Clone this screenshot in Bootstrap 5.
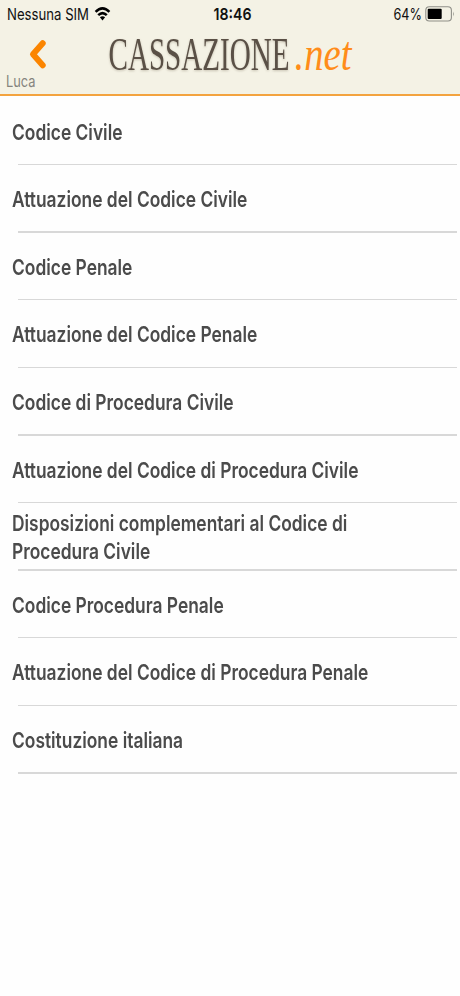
<!DOCTYPE html>
<html lang="it">
<head>
<meta charset="utf-8">
<meta name="viewport" content="width=device-width, initial-scale=1">
<title>Cassazione.net</title>
<link href="https://cdn.jsdelivr.net/npm/bootstrap@5.3.0/dist/css/bootstrap.min.css" rel="stylesheet">
<style>
  body { font-family: Inter, "Liberation Sans", sans-serif; background: #fefefe; min-height: 996px; }
  .app-header { height: 96px; background: #f4f2e5; border-bottom: 2px solid #f3a33f; }
  .app-header svg { display: block; }
  .wordmark { filter: drop-shadow(.8px 1.2px .8px rgba(90, 75, 50, .28)); }
  .codes { padding-top: 1.6px; }
  .code-row { height: 67.6px; padding: 3px 0 0 11.5px; color: #4b4b4b; font-size: 22px; font-weight: 600; line-height: 27.4px; }
  .code-row::after { content: ""; height: 1.3px; background: #d8d8d8; margin: 0 3px 0 6.5px; flex: none; }
  .squeeze { display: inline-block; transform: scaleX(.79); transform-origin: 0 50%; white-space: nowrap; }
</style>
</head>
<body>
<header class="app-header">
  <svg width="460" height="94" viewBox="0 0 460 94" font-family="Inter, 'Liberation Sans', sans-serif" role="img" aria-label="Cassazione.net">
    <g fill="#111">
      <text x="7" y="20.3" font-size="16.5" textLength="82" lengthAdjust="spacingAndGlyphs">Nessuna SIM</text>
      <text x="213.5" y="20.3" font-size="16.5" font-weight="600" textLength="38" lengthAdjust="spacingAndGlyphs">18:46</text>
      <text x="393.5" y="20.3" font-size="16.5" textLength="28.5" lengthAdjust="spacingAndGlyphs">64%</text>
    </g>
    <g fill="none" stroke="#000" stroke-width="2.5">
      <path d="M95.6 11.9Q102.5 5 109.4 11.9"/>
      <path d="M98.2 15.2Q102.5 11 106.8 15.2"/>
    </g>
    <path d="M99.9 17.3Q102.5 15 105.1 17.3L102.5 20.5Z"/>
    <rect x="425.8" y="6.8" width="25.6" height="14.2" rx="3.5" fill="none" stroke="#8f8f88" stroke-width="1.1"/>
    <rect x="427.7" y="8.8" width="14" height="10.2" rx="1"/>
    <path d="M453 11.5Q454.6 14 453 16.5Z" fill="#8f8f88"/>
    <path d="M42.7 43.3L33 54.3L42.7 65.2" fill="none" stroke="#fb8500" stroke-width="6" stroke-linecap="round" stroke-linejoin="round"/>
    <text x="6" y="87.4" font-size="16.5" fill="#85847e" textLength="29.5" lengthAdjust="spacingAndGlyphs">Luca</text>
    <g font-family="'Liberation Serif', serif">
      <text class="wordmark" x="108.5" y="69.9" font-size="45.5" fill="#5a5046" textLength="181" lengthAdjust="spacingAndGlyphs">CASSAZIONE</text>
      <text x="294.5" y="69.5" font-size="48" font-style="italic" fill="#ff8c1a" textLength="57" lengthAdjust="spacingAndGlyphs">.net</text>
    </g>
  </svg>
</header>
<main class="codes d-flex flex-column">
  <div class="code-row d-flex flex-column"><div class="flex-grow-1 d-flex align-items-center"><span class="squeeze">Codice Civile</span></div></div>
  <div class="code-row d-flex flex-column"><div class="flex-grow-1 d-flex align-items-center"><span class="squeeze">Attuazione del Codice Civile</span></div></div>
  <div class="code-row d-flex flex-column"><div class="flex-grow-1 d-flex align-items-center"><span class="squeeze">Codice Penale</span></div></div>
  <div class="code-row d-flex flex-column"><div class="flex-grow-1 d-flex align-items-center"><span class="squeeze">Attuazione del Codice Penale</span></div></div>
  <div class="code-row d-flex flex-column"><div class="flex-grow-1 d-flex align-items-center"><span class="squeeze">Codice di Procedura Civile</span></div></div>
  <div class="code-row d-flex flex-column"><div class="flex-grow-1 d-flex align-items-center"><span class="squeeze">Attuazione del Codice di Procedura Civile</span></div></div>
  <div class="code-row d-flex flex-column"><div class="flex-grow-1 d-flex align-items-center"><span class="squeeze">Disposizioni complementari al Codice di<br>Procedura Civile</span></div></div>
  <div class="code-row d-flex flex-column"><div class="flex-grow-1 d-flex align-items-center"><span class="squeeze">Codice Procedura Penale</span></div></div>
  <div class="code-row d-flex flex-column"><div class="flex-grow-1 d-flex align-items-center"><span class="squeeze">Attuazione del Codice di Procedura Penale</span></div></div>
  <div class="code-row d-flex flex-column"><div class="flex-grow-1 d-flex align-items-center"><span class="squeeze">Costituzione italiana</span></div></div>
</main>
<script src="https://cdn.jsdelivr.net/npm/bootstrap@5.3.0/dist/js/bootstrap.bundle.min.js"></script>
</body>
</html>
